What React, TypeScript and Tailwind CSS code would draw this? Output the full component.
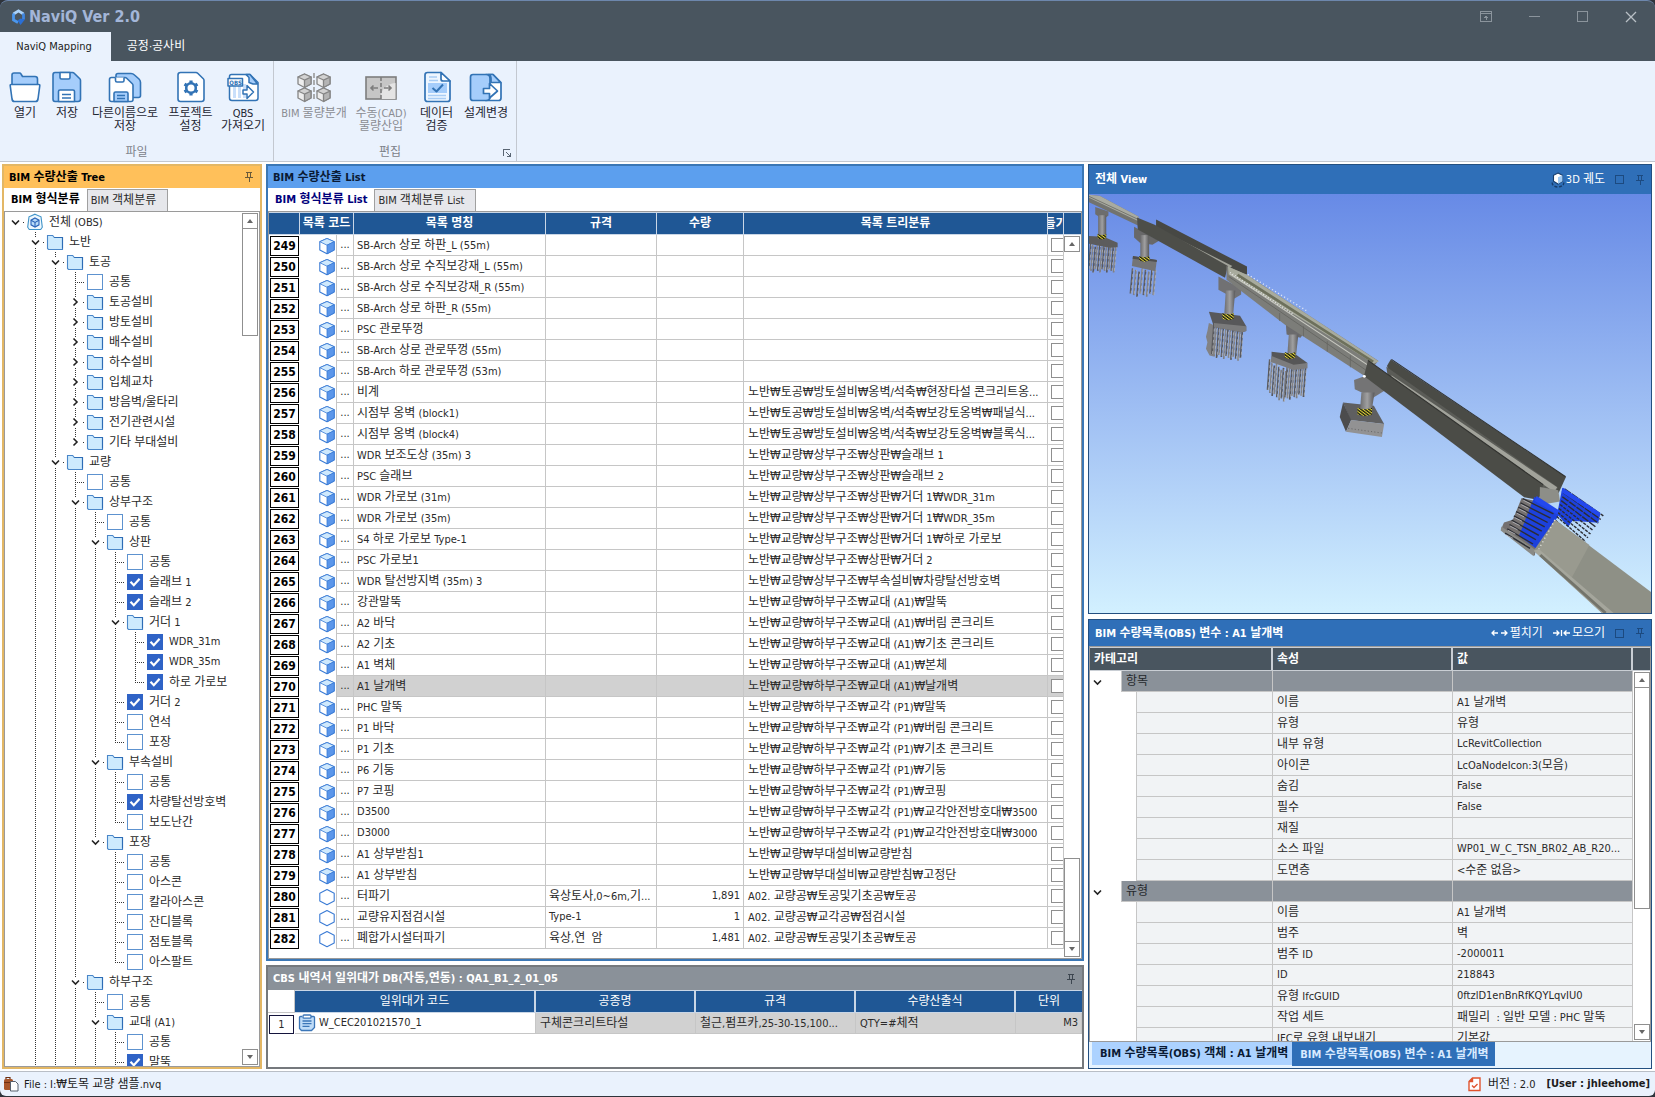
import React from "react";

/* Hangul and the won sign are set one size above the Latin text, as in the Windows UI fonts. */
function T({ children }: { children: string }) {
  const runs = children.split(/([\u3131-\uD79D\u20A9]+)/).filter(Boolean);
  return (
    <>
      {runs.map((r, i) =>
        /[\u3131-\uD79D\u20A9]/.test(r) ? (
          <span key={i} className="text-[12px]">{r}</span>
        ) : (
          <React.Fragment key={i}>{r}</React.Fragment>
        )
      )}
    </>
  );
}

/* ---------- small icons ---------- */

const Pin = ({ color = "#3d4650" }: { color?: string }) => (
  <svg width="10" height="10" viewBox="0 0 10 10" fill="none" stroke={color} shapeRendering="crispEdges">
    <path d="M2 .5h6M3.5 .5v5M6.5 .5v5M1 5.5h8M5 5.5V10" />
  </svg>
);

const Square = () => (
  <svg width="9" height="9" viewBox="0 0 9 9" fill="none" stroke="#1c4a80" shapeRendering="crispEdges">
    <rect x=".5" y=".5" width="8" height="8" />
  </svg>
);

const Chevron = ({ open, guide = "" }: { open: boolean; guide?: string }) => (
  <svg width="20" height="20" viewBox="0 0 20 20" fill="none" stroke="#222" strokeWidth="1.6">
    {guide && <path d={guide} stroke="#333" strokeWidth="1" strokeDasharray="1 1" shapeRendering="crispEdges" />}
    {open ? <path d="M7 8.5l3.500 3.500 3.500-3.500" /> : <path d="M8.500 6.5L12 10l-3.500 3.500" />}
  </svg>
);

const Folder = () => (
  <svg width="18" height="18" viewBox="0 0 18 18">
    <path d="M1.5 2.5h5.2l1.6 2h8.2v12h-14l-1-1z" fill="#cdeafd" stroke="#4a87c9" strokeWidth="1.1" />
    <path d="M8.3 4.5h8.2v11" fill="none" stroke="#2d6cb5" strokeWidth="1.1" />
  </svg>
);

const RootIcon = () => (
  <svg width="18" height="18" viewBox="0 0 18 18" fill="none" stroke="#3f93c8" strokeWidth="1.1">
    <path d="M9 1.2l6 2.6 1.3 10.4-1.6 2.3H3.3l-1.6-2.3L3 3.8z" fill="#eef8fe" />
    <path d="M9 5l4 2.2v4.6L9 14l-4-2.2V7.200z" fill="#b9dcf8" stroke="#2a63b8" />
    <path d="M5 7.200L9 9.400l4-2.200M9 9.400V14" stroke="#2a63b8" />
  </svg>
);

const Cube = () => (
  <svg width="18" height="18" viewBox="0 0 18 18" strokeLinejoin="round">
    <path d="M9 1.500l7.200 3.200v8.200L9 16.800 1.800 12.900V4.700z" fill="#fff" stroke="#3a7bd5" strokeWidth="1.100" />
    <path d="M9 1.500l7.200 3.200L9 8.200 1.800 4.700z" fill="#cfe9fd" stroke="#3a7bd5" strokeWidth=".8" />
    <path d="M9 8.200l7.200-3.500v8.200L9 16.800z" fill="#5b96ea" stroke="#3a7bd5" strokeWidth=".8" />
  </svg>
);

const Hexagon = () => (
  <svg width="18" height="18" viewBox="0 0 18 18" strokeLinejoin="round">
    <path d="M9 1.500l7.200 3.700v7.800L9 16.700 1.800 13V5.200z" fill="#fff" stroke="#3a7bd5" strokeWidth="1.100" />
  </svg>
);

const Clipboard = () => (
  <svg width="18" height="18" viewBox="0 0 18 18" fill="none" stroke="#3b76b8" strokeWidth="1.300">
    <path d="M4 2.500H2.500a1 1 0 00-1 1v11l2 2h10l3-3v-10a1 1 0 00-1-1H13" fill="#bfdcf8" />
    <rect x="5" y="1" width="8" height="3.200" rx="1" fill="#fff" />
    <path d="M4.500 7h9M4.500 9.700h9M4.500 12.400h7" />
  </svg>
);

const Orbit = () => (
  <svg width="14" height="18" viewBox="0 0 14 18">
    <path d="M1.500 11.500c-1 2 2 4.500 5.500 4.500s6.500-2.500 5.500-4.500" fill="none" stroke="#173c6b" strokeWidth="1.400" strokeDasharray="3 1.500" />
    <path d="M7 2l4.500 2.300v6L7 13 2.500 10.300v-6z" fill="#fff" stroke="#173c6b" strokeWidth="1.100" />
    <path d="M7 6.300l4.500-2v6L7 13z" fill="#9fc9f2" />
  </svg>
);

/* ---------- ribbon icons ---------- */

const B = "#3273b5";
const L = "#a5cdfb";

const OpenIcon = () => (
  <svg width="32" height="32" viewBox="0 0 32 32" stroke={B} strokeWidth="1.600" strokeLinejoin="round">
    <path d="M3 14V4Q3 2 5 2h5.500q1 0 1.500 1l1.500 2.500H26Q28.500 5.500 28.500 8v6z" fill={L} />
    <path d="M2.200 13.500h27.600q1.200 0 1 1.200L29 28q-.4 2.500-2.500 2.500h-21Q3.400 30.500 3 28L1.200 14.700q-.2-1.200 1-1.200z" fill="#fff" />
  </svg>
);

const SaveIcon = () => (
  <svg width="32" height="32" viewBox="0 0 32 32" stroke={B} strokeWidth="1.600" strokeLinejoin="round">
    <path d="M4 1.500h17.500q1 0 1.700.7l5.600 5.600q.7.700.7 1.700V28q0 2.500-2.500 2.500H4Q2 30.500 2 28V4q0-2.500 2-2.500z" fill={L} />
    <path d="M9 1.500v5q0 1.500 1.500 1.500h7q1.500 0 1.500-1.500v-5z" fill="#fff" />
    <path d="M7.500 30.500v-10q0-1.500 1.500-1.500h13q1.500 0 1.500 1.500v10z" fill="#fff" />
    <path d="M11 23.500h9M11 27h9" fill="none" />
  </svg>
);

const SaveAsIcon = () => (
  <svg width="34" height="32" viewBox="0 0 34 32" stroke={B} strokeWidth="1.600" strokeLinejoin="round">
    <path d="M10 2.500h13q2 0 3.500 1.500l4.500 4q1.500 1.500 1.500 3.500v13q0 2-2 2H8V4.500q0-2 2-2z" fill={L} />
    <path d="M3.500 6.500H17q1 0 1.700.7l5.600 5.600q.7.700.7 1.700v14q0 2-2 2H3.500q-2 0-2-2v-20q0-2 2-2z" fill="#fff" />
    <path d="M7.500 6.500v3q0 1.500 1.500 1.500h5.500q1.500 0 1.500-1.500v-3" fill="#fff" />
    <path d="M6 30.500v-8q0-1.500 1.500-1.500h11q1.500 0 1.500 1.500v8z" fill={L} />
    <path d="M9 24.500h8M9 27.500h8" fill="none" />
  </svg>
);

const SettingsIcon = () => (
  <svg width="32" height="32" viewBox="0 0 32 32" stroke={B} strokeWidth="1.600" strokeLinejoin="round">
    <path d="M5.500 1.500H21q1 0 1.700.7l5.600 5.600q.7.700.7 1.700V28q0 2.500-2.500 2.500h-21Q3 30.500 3 28V4q0-2.500 2.500-2.500z" fill="#fff" />
    <circle cx="16" cy="17" r="4.800" fill="none" strokeWidth="2.600" />
    <path d="M16 9.500v3M16 21.500v3M9.500 13.200l2.600 1.500M19.900 19.300l2.600 1.500M9.500 20.800l2.600-1.500M19.900 14.700l2.600-1.500" strokeWidth="3.200" />
  </svg>
);

const QbsIcon = () => (
  <svg width="32" height="32" viewBox="0 0 32 32" stroke={B} strokeWidth="1.500" strokeLinejoin="round">
    <path d="M4.500 3.500H23l8 8v15.500q0 2.500-2.500 2.500H5Q2.500 29.500 2.500 27V5.500q0-2 2-2z" fill="#fff" />
    <path d="M6 15h3v12H6zM11 15h3v12h-3zM16 13h3v14h-3z" fill="#c9dffa" stroke="none" />
    <path d="M19 3.500l3 3v5l4 1.500h4.500L23 3.500z" fill={L} />
    <rect x="1" y="7.500" width="14.500" height="7.500" fill="#fff" />
    <text x="2.300" y="13.500" fontSize="6" fontWeight="700" fill={B} stroke="none" fontFamily="DejaVu Sans Condensed">QBS</text>
    <path d="M16 19h4v-4.500l6.500 6.500-6.500 6.500V23h-4z" fill="#fff" />
  </svg>
);

const MiniCube = ({ x, y }: { x: number; y: number }) => (
  <g transform={`translate(${x} ${y})`} stroke="#858585" strokeWidth="1.300" strokeLinejoin="round">
    <path d="M6.500 0l6.500 3v7l-6.500 3.500L0 10V3z" fill="#ededed" />
    <path d="M6.500 6l6.500-3v7l-6.500 3.500z" fill="#b4b4b4" />
    <path d="M0 3l6.500 3L13 3 6.500 0z" fill="#d2d2d2" />
  </g>
);

const SplitIcon = () => (
  <svg width="34" height="32" viewBox="0 0 34 32">
    <MiniCube x={1} y={3} />
    <MiniCube x={1} y={17} />
    <MiniCube x={20} y={3} />
    <MiniCube x={20} y={17} />
    <path d="M17 2v28" stroke="#9a9a9a" strokeWidth="1.600" strokeDasharray="5 2" />
  </svg>
);

const CadIcon = () => (
  <svg width="34" height="32" viewBox="0 0 34 32" fill="none" stroke="#7d7d7d" strokeWidth="1.600">
    <rect x="2" y="6" width="30" height="22" fill="#c6c6c6" />
    <path d="M17 28c-1-9 5-15 14.500-16v16z" fill="#e4e4e4" stroke="none" />
    <path d="M17 6v22" strokeDasharray="4 2" />
    <path d="M14 17H7M9.500 14.500L7 17l2.500 2.500M20 17h7M24.500 14.500L27 17l-2.500 2.500" />
  </svg>
);

const VerifyIcon = () => (
  <svg width="32" height="32" viewBox="0 0 32 32" stroke={B} strokeWidth="1.700" strokeLinejoin="round">
    <path d="M6.500 1.500H20l9 8.500v18q0 2.500-2.500 2.500h-20Q4 30.500 4 28V4q0-2.500 2.500-2.500z" fill="#eef6ff" />
    <path d="M8 6h8M8 9.500h9M7 24.500h18M7 27.500h18" stroke="#a9cdf5" />
    <path d="M7 12h19v10H7z" fill={L} stroke="none" />
    <path d="M20 1.500V8q0 2 2 2h7z" fill="#fff" />
    <path d="M11.500 17l4 3.500 6.500-7" fill="none" strokeWidth="2" />
  </svg>
);

const ChangeIcon = () => (
  <svg width="34" height="32" viewBox="0 0 34 32" stroke={B} strokeWidth="1.700" strokeLinejoin="round">
    <path d="M17 3.500h7l8 8v15.500q0 2.500-2.500 2.500H17z" fill="#fff" />
    <path d="M4 3.500h13q4 0 4 4V26q0 3.500-4 3.500H4q-2.500 0-2.500-2.500V6Q1.500 3.500 4 3.500z" fill={L} />
    <path d="M19 3.500q3 .5 3 4v4h9.500l-7.500-8z" fill={L} />
    <path d="M14.500 17.500h6v-5l8 7.500-8 7v-4.500h-6z" fill="#fff" />
  </svg>
);

/* ---------- shared pieces ---------- */

function ScrollBar({ thumb }: { thumb: "tree" | "list" | "props" }) {
  const btn = "grid h-4 w-4 shrink-0 place-items-center border border-[#8f8f8f] bg-white";
  return (
    <div className="flex w-4 shrink-0 flex-col bg-white">
      <button className={btn} aria-label="위로">
        <svg width="6" height="4" viewBox="0 0 6 4"><path d="M0 4l3-4 3 4z" fill="#666" /></svg>
      </button>
      {thumb === "tree" && <div className="-mt-px h-[108px] border border-[#8f8f8f]" />}
      {thumb === "props" && <div className="-mt-px h-[222px] border border-[#8f8f8f]" />}
      <div className="flex-1" />
      {thumb === "list" && <div className="-mb-px h-[84px] border border-[#8f8f8f]" />}
      <button className={btn} aria-label="아래로">
        <svg width="6" height="4" viewBox="0 0 6 4"><path d="M0 0l3 4 3-4z" fill="#666" /></svg>
      </button>
    </div>
  );
}

function TabStrip({ active, other, color }: { active: string; other: string; color: string }) {
  return (
    <div className="flex h-6 items-end border-b border-[#9a9a9a] bg-white" role="tablist">
      <button role="tab" aria-selected="true" className={"h-[23px] whitespace-nowrap pl-[7px] pr-[7px] text-left font-bold " + color}>
        <T>{active}</T>
      </button>
      <button role="tab" aria-selected="false" className="h-[22px] whitespace-nowrap border border-b-0 border-[#a0a0a0] bg-[#e6e7eb] pl-[3px] pr-[11px] text-left">
        <T>{other}</T>
      </button>
    </div>
  );
}

/* ---------- title and ribbon ---------- */

function RibbonButton({ icon, lines, w, off }: { icon: React.ReactNode; lines: string[]; w: string; off?: boolean }) {
  return (
    <button disabled={off} className={"flex flex-col items-center whitespace-nowrap leading-[13px] " + w + (off ? " text-[#8a8d93]" : " text-[#1e2633]")}>
      {icon}
      <span className="mt-1">
        {lines.map((l) => (
          <span key={l} className="block"><T>{l}</T></span>
        ))}
      </span>
    </button>
  );
}

function TitleBar() {
  return (
    <header className="rounded-t-lg border-t border-[#6d87ad] bg-[#49555f]">
      <div className="flex h-[31px] items-center pl-[11px] pr-[18px]">
        <svg width="15" height="18" viewBox="0 0 15 18" fill="none">
          <path d="M2.500 6L7.500 2.800 12.500 6" stroke="#a9d2fb" strokeWidth="2.800" />
          <path d="M2.500 5.500v6.400l4.500 2.600" stroke="#4b97ee" strokeWidth="2.800" />
          <path d="M12.500 5.500v6" stroke="#3f86e0" strokeWidth="2.800" />
          <path d="M6.500 12.500l3-2 4.400 1-4.400 5.500z" fill="#2a6fd6" />
        </svg>
        <h1 className="ml-[3px] text-[16px] font-bold text-[#a3b6d8]">NaviQ Ver 2.0</h1>
        <div className="ml-auto flex items-center gap-[37px]">
          <button aria-label="리본 표시 옵션">
            <svg width="12" height="11" viewBox="0 0 12 11" fill="none" stroke="#8b949c" shapeRendering="crispEdges">
              <path d="M.5 .5h11v10H.5zM.5 2.500h11M6 9V4.500M4 6.500h4M5 5.500h2" />
            </svg>
          </button>
          <button aria-label="최소화">
            <svg width="11" height="11" viewBox="0 0 11 11" stroke="#8b949c" shapeRendering="crispEdges"><path d="M0 5.500h11" /></svg>
          </button>
          <button aria-label="최대화">
            <svg width="11" height="11" viewBox="0 0 11 11" fill="none" stroke="#8b949c" shapeRendering="crispEdges"><path d="M.5 .5h10v10H.5z" /></svg>
          </button>
          <button aria-label="닫기">
            <svg width="12" height="12" viewBox="0 0 12 12" stroke="#b9c0c6" strokeWidth="1.300"><path d="M1 1l10 10M11 1L1 11" /></svg>
          </button>
        </div>
      </div>
      <nav className="flex h-[29px]">
        <button className="w-[111px] bg-[#eaf2fd] pr-[3px] text-[#222]">NaviQ Mapping</button>
        <button className="w-[90px] text-white"><T>공정·공사비</T></button>
      </nav>
    </header>
  );
}

function Ribbon() {
  return (
    <section className="flex h-[101px] border-b border-[#c3c8d0] bg-[#eaf2fd]">
      <div className="flex w-[274px] flex-col border-r border-[#c3c8d0] pl-1 pt-[10px]">
        <div className="flex h-[73px] items-start">
          <RibbonButton w="w-[42px]" icon={<OpenIcon />} lines={["열기"]} />
          <RibbonButton w="w-[42px]" icon={<SaveIcon />} lines={["저장"]} />
          <RibbonButton w="w-[74px]" icon={<SaveAsIcon />} lines={["다른이름으로", "저장"]} />
          <RibbonButton w="w-[57px]" icon={<SettingsIcon />} lines={["프로젝트", "설정"]} />
          <RibbonButton w="w-[48px]" icon={<QbsIcon />} lines={["QBS", "가져오기"]} />
        </div>
        <div className="pr-1 text-center leading-[16px] text-[#7d828a]"><T>파일</T></div>
      </div>
      <div className="flex w-[243px] flex-col border-r border-[#c3c8d0] pl-[6px] pt-[10px]">
        <div className="flex h-[73px] items-start">
          <RibbonButton off w="w-[68px]" icon={<SplitIcon />} lines={["BIM 물량분개"]} />
          <RibbonButton off w="w-[66px]" icon={<CadIcon />} lines={["수동(CAD)", "물량산입"]} />
          <RibbonButton w="w-[45px]" icon={<VerifyIcon />} lines={["데이터", "검증"]} />
          <RibbonButton w="w-[54px]" icon={<ChangeIcon />} lines={["설계변경"]} />
        </div>
        <div className="relative pr-4 text-center leading-[16px] text-[#7d828a]">
          <T>편집</T>
          <button className="absolute right-[5px] top-[5px]" aria-label="편집 옵션">
            <svg width="8" height="8" viewBox="0 0 8 8" fill="none" stroke="#596573" shapeRendering="crispEdges">
              <path d="M.5 7V.5H7M3 3l4 4M7.500 3.500v4h-4" />
            </svg>
          </button>
        </div>
      </div>
    </section>
  );
}

/* ---------- tree panel ---------- */

type Kind = "root" | "open" | "closed" | "off" | "on";
type Node = [number, Kind, string];

const nodes: Node[] = [
  [0, "root", "전체 (OBS)"],
  [1, "open", "노반"],
  [2, "open", "토공"],
  [3, "off", "공통"],
  [3, "closed", "토공설비"],
  [3, "closed", "방토설비"],
  [3, "closed", "배수설비"],
  [3, "closed", "하수설비"],
  [3, "closed", "입체교차"],
  [3, "closed", "방음벽/울타리"],
  [3, "closed", "전기관련시설"],
  [3, "closed", "기타 부대설비"],
  [2, "open", "교량"],
  [3, "off", "공통"],
  [3, "open", "상부구조"],
  [4, "off", "공통"],
  [4, "open", "상판"],
  [5, "off", "공통"],
  [5, "on", "슬래브 1"],
  [5, "on", "슬래브 2"],
  [5, "open", "거더 1"],
  [6, "on", "WDR_31m"],
  [6, "on", "WDR_35m"],
  [6, "on", "하로 가로보"],
  [5, "on", "거더 2"],
  [5, "off", "연석"],
  [5, "off", "포장"],
  [4, "open", "부속설비"],
  [5, "off", "공통"],
  [5, "on", "차량탈선방호벽"],
  [5, "off", "보도난간"],
  [4, "open", "포장"],
  [5, "off", "공통"],
  [5, "off", "아스콘"],
  [5, "off", "칼라아스콘"],
  [5, "off", "잔디블록"],
  [5, "off", "점토블록"],
  [5, "off", "아스팔트"],
  [3, "open", "하부구조"],
  [4, "off", "공통"],
  [4, "open", "교대 (A1)"],
  [5, "off", "공통"],
  [5, "on", "말뚝"],
];

/* True when the branch at this level goes on below the given row. */
function continues(row: number, level: number) {
  for (let i = row + 1; i < nodes.length; i++) {
    if (nodes[i][0] === level) return true;
    if (nodes[i][0] < level) return false;
  }
  return true;
}

function Guide({ d }: { d: string }) {
  return (
    <svg className="shrink-0" width="20" height="20" viewBox="0 0 20 20" fill="none" stroke="#333" strokeDasharray="1 1" shapeRendering="crispEdges">
      <path d={d} />
    </svg>
  );
}

function TreeRow({ index }: { index: number }) {
  const [level, kind, name] = nodes[index];
  const leaf = kind === "on" || kind === "off";
  const more = continues(index, level);
  const stub = (level > 0 ? "M10.500 0v5" : "") + (level > 0 && more ? "M10.500 16v4" : "") + "M18 10.500h2";
  const guides = [];
  for (let k = 1; k < level; k++) guides.push(<Guide key={k} d={continues(index, k) ? "M10.500 0v20" : ""} />);
  return (
    <li className="flex h-5 items-center">
      {level > 0 && <span className="w-5 shrink-0" />}
      {guides}
      {leaf ? (
        <>
          <Guide d={(more ? "M10.500 0v20" : "M10.500 0v10") + "M10 10.500h10"} />
          <label className="flex items-center">
            <span className="relative mx-[2px] block h-4 w-4 shrink-0">
              <input type="checkbox" defaultChecked={kind === "on"} className="peer block h-4 w-4 appearance-none border border-[#5d92cf] bg-white checked:border-[#2f63c6] checked:bg-[#2f63c6]" />
              <svg className="pointer-events-none absolute inset-0 hidden peer-checked:block" width="16" height="16" viewBox="0 0 16 16" fill="none" stroke="#fff" strokeWidth="2.200">
                <path d="M3.500 7.800l3.300 3.400 5.800-6.400" />
              </svg>
            </span>
            <span className="whitespace-nowrap pl-1"><T>{name}</T></span>
          </label>
        </>
      ) : (
        <>
          <button aria-label={name} className="shrink-0"><Chevron open={kind !== "closed"} guide={stub} /></button>
          <span className="mx-px flex shrink-0">{kind === "root" ? <RootIcon /> : <Folder />}</span>
          <span className="whitespace-nowrap pl-1"><T>{name}</T></span>
        </>
      )}
    </li>
  );
}

function TreePanel() {
  return (
    <section className="flex w-[260px] shrink-0 flex-col border-2 border-[#e3b765] bg-white">
      <h2 className="flex h-[22px] items-center justify-between bg-[#ffc05a] pl-[5px] pr-[6px] font-bold text-black">
        <span><T>BIM 수량산출 Tree</T></span>
        <Pin color="#6b5a38" />
      </h2>
      <TabStrip active="BIM 형식분류" other="BIM 객체분류" color="text-black" />
      <div className="flex min-h-0 flex-1 border-x border-b border-[#9a9a9a]">
        <ul className="min-h-0 flex-1 overflow-hidden">
          {nodes.map((_, i) => <TreeRow key={i} index={i} />)}
        </ul>
        <div className="flex py-px pr-px"><ScrollBar thumb="tree" /></div>
      </div>
    </section>
  );
}

/* ---------- quantity list ---------- */

type Row = [string, string, string, string];

const listRows: Row[] = [
  ["SB-Arch 상로 하판_L (55m)", "", "", ""],
  ["SB-Arch 상로 수직보강재_L (55m)", "", "", ""],
  ["SB-Arch 상로 수직보강재_R (55m)", "", "", ""],
  ["SB-Arch 상로 하판_R (55m)", "", "", ""],
  ["PSC 관로뚜껑", "", "", ""],
  ["SB-Arch 상로 관로뚜껑 (55m)", "", "", ""],
  ["SB-Arch 하로 관로뚜껑 (53m)", "", "", ""],
  ["비계", "", "", "노반₩토공₩방토설비₩옹벽/석축₩현장타설 콘크리트옹..."],
  ["시점부 옹벽 (block1)", "", "", "노반₩토공₩방토설비₩옹벽/석축₩보강토옹벽₩패널식..."],
  ["시점부 옹벽 (block4)", "", "", "노반₩토공₩방토설비₩옹벽/석축₩보강토옹벽₩블록식..."],
  ["WDR 보조도상 (35m) 3", "", "", "노반₩교량₩상부구조₩상판₩슬래브 1"],
  ["PSC 슬래브", "", "", "노반₩교량₩상부구조₩상판₩슬래브 2"],
  ["WDR 가로보 (31m)", "", "", "노반₩교량₩상부구조₩상판₩거더 1₩WDR_31m"],
  ["WDR 가로보 (35m)", "", "", "노반₩교량₩상부구조₩상판₩거더 1₩WDR_35m"],
  ["S4 하로 가로보 Type-1", "", "", "노반₩교량₩상부구조₩상판₩거더 1₩하로 가로보"],
  ["PSC 가로보1", "", "", "노반₩교량₩상부구조₩상판₩거더 2"],
  ["WDR 탈선방지벽 (35m) 3", "", "", "노반₩교량₩상부구조₩부속설비₩차량탈선방호벽"],
  ["강관말뚝", "", "", "노반₩교량₩하부구조₩교대 (A1)₩말뚝"],
  ["A2 바닥", "", "", "노반₩교량₩하부구조₩교대 (A1)₩버림 콘크리트"],
  ["A2 기초", "", "", "노반₩교량₩하부구조₩교대 (A1)₩기초 콘크리트"],
  ["A1 벽체", "", "", "노반₩교량₩하부구조₩교대 (A1)₩본체"],
  ["A1 날개벽", "", "", "노반₩교량₩하부구조₩교대 (A1)₩날개벽"],
  ["PHC 말뚝", "", "", "노반₩교량₩하부구조₩교각 (P1)₩말뚝"],
  ["P1 바닥", "", "", "노반₩교량₩하부구조₩교각 (P1)₩버림 콘크리트"],
  ["P1 기초", "", "", "노반₩교량₩하부구조₩교각 (P1)₩기초 콘크리트"],
  ["P6 기둥", "", "", "노반₩교량₩하부구조₩교각 (P1)₩기둥"],
  ["P7 코핑", "", "", "노반₩교량₩하부구조₩교각 (P1)₩코핑"],
  ["D3500", "", "", "노반₩교량₩하부구조₩교각 (P1)₩교각안전방호대₩3500"],
  ["D3000", "", "", "노반₩교량₩하부구조₩교각 (P1)₩교각안전방호대₩3000"],
  ["A1 상부받침1", "", "", "노반₩교량₩부대설비₩교량받침"],
  ["A1 상부받침", "", "", "노반₩교량₩부대설비₩교량받침₩고정단"],
  ["터파기", "육상토사,0~6m,기...", "1,891", "A02. 교량공₩토공및기초공₩토공"],
  ["교량유지점검시설", "Type-1", "1", "A02. 교량공₩교각공₩점검시설"],
  ["폐합가시설터파기", "육상,연  암", "1,481", "A02. 교량공₩토공및기초공₩토공"],
];

const cell = "h-[21px] overflow-hidden whitespace-pre border-b border-r border-[#c6c6c6] p-0 leading-[18px]";
const head = "h-[23px] overflow-hidden whitespace-nowrap border border-l-0 border-[#c9d6e6] bg-[#1f5795] p-0 text-center text-white";

function ListPanel() {
  return (
    <section className="flex min-h-0 flex-1 flex-col border-2 border-[#3b77b5] bg-white">
      <h2 className="flex h-[22px] items-center bg-[#5c9fee] pl-[5px] font-bold text-[#0a1a33]">
        <span><T>BIM 수량산출 List</T></span>
      </h2>
      <TabStrip active="BIM 형식분류 List" other="BIM 객체분류 List" color="text-[#00007c]" />
      <div className="flex min-h-0 flex-1 border-x border-b border-[#9a9a9a]">
        <div className="min-h-0 min-w-0 flex-1 overflow-hidden">
          <table className="w-full table-fixed border-separate border-spacing-0">
            <colgroup>
              <col className="w-[31px]" />
              <col className="w-[37px]" />
              <col className="w-[17px]" />
              <col className="w-[192px]" />
              <col className="w-[111px]" />
              <col className="w-[87px]" />
              <col />
              <col className="w-[16px]" />
            </colgroup>
            <thead>
              <tr>
                <th className={head} aria-label="번호" />
                <th className={head} colSpan={2}><T>목록 코드</T></th>
                <th className={head}><T>목록 명칭</T></th>
                <th className={head}><T>규격</T></th>
                <th className={head}><T>수량</T></th>
                <th className={head}><T>목록 트리분류</T></th>
                <th className={head}><span className="flex justify-center overflow-hidden"><T>들기</T></span></th>
              </tr>
            </thead>
            <tbody>
              {listRows.map(([name, spec, qty, path], i) => {
                const no = 249 + i;
                const bg = no === 270 ? " bg-[#d1d1d1]" : "";
                return (
                  <tr key={no}>
                    <th className="h-[21px] p-0 pt-px">
                      <div className="mx-px h-[20px] border border-black text-center text-[12px] font-bold leading-[18px] text-black">{no}</div>
                    </th>
                    <td className="h-[21px] border-r border-[#c6c6c6] p-0">
                      <div className="flex justify-end">{no < 280 ? <Cube /> : <Hexagon />}</div>
                    </td>
                    <td className={cell + bg + " text-center"}>...</td>
                    <td className={cell + bg + " pl-[3px]"}><T>{name}</T></td>
                    <td className={cell + bg + " pl-[3px]"}><T>{spec}</T></td>
                    <td className={cell + bg + " pr-[3px] text-right"}>{qty}</td>
                    <td className={cell + bg + " pl-[4px]"}><T>{path}</T></td>
                    <td className={cell + bg}>
                      <input type="checkbox" aria-label={no + " 들기"} className="ml-[3px] block h-[14px] w-5 appearance-none border border-[#8f8f8f] bg-white" />
                    </td>
                  </tr>
                );
              })}
            </tbody>
          </table>
        </div>
        <div className="flex w-[17px] flex-col">
          <div className="h-[23px] border-y border-[#c9d6e6] bg-[#1f5795]" />
          <div className="flex flex-1 py-px"><ScrollBar thumb="list" /></div>
        </div>
      </div>
    </section>
  );
}

function CostPanel() {
  const h = "h-[23px] border-b border-r-2 border-t border-[#c9d6e6] bg-[#1f5795] p-0 text-center font-normal text-white last:border-r-0";
  const c = "h-[21px] whitespace-nowrap border-b border-r border-[#c6c6c6] bg-[#d1d1d1] p-0 pl-[4px] leading-[18px]";
  return (
    <section className="flex h-[104px] shrink-0 flex-col border-2 border-[#75797d] bg-white">
      <h2 className="flex h-[23px] items-center justify-between bg-[#8a9199] pl-[5px] pr-[6px] font-bold text-white">
        <span><T>CBS 내역서 일위대가 DB(자동,연동) : QA1_B1_2_01_05</T></span>
        <Pin />
      </h2>
      <table className="w-full table-fixed border-separate border-spacing-0">
        <colgroup>
          <col className="w-[27px]" />
          <col className="w-[241px]" />
          <col className="w-[160px]" />
          <col className="w-[160px]" />
          <col className="w-[160px]" />
          <col />
        </colgroup>
        <thead>
          <tr>
            <th className="border-b border-r border-[#c6c6c6] p-0" aria-label="번호" />
            <th className={h}><T>일위대가 코드</T></th>
            <th className={h}><T>공종명</T></th>
            <th className={h}><T>규격</T></th>
            <th className={h}><T>수량산출식</T></th>
            <th className={h}><T>단위</T></th>
          </tr>
        </thead>
        <tbody>
          <tr>
            <th className="h-[21px] p-0 pt-px">
              <div className="mx-px h-[19px] border border-[#14143c] text-center font-normal leading-[17px]">1</div>
            </th>
            <td className="h-[21px] border-b border-r border-[#c6c6c6] p-0">
              <div className="flex items-center gap-[3px] pl-[3px]"><Clipboard />W_CEC201021570_1</div>
            </td>
            <td className={c}><T>구체콘크리트타설</T></td>
            <td className={c}><T>철근,펌프카,25-30-15,100...</T></td>
            <td className={c}><T>QTY=#체적</T></td>
            <td className={c + " pr-[3px] text-right"}>M3</td>
          </tr>
        </tbody>
      </table>
    </section>
  );
}

/* ---------- 3D view ---------- */

function Piles({ x, y, w, h, n, skew = 0 }: { x: number; y: number; w: number; h: number; n: number; skew?: number }) {
  const lines = [];
  for (let i = 0; i < n; i++) {
    const px = x + (w * i) / (n - 1);
    const dy = (i % 3) * 5 + (skew * i) / n;
    lines.push(<path key={i} d={`M${px} ${y + dy}L${px - 6} ${y + h + dy}`} stroke={i % 2 ? "#808083" : "#58585c"} strokeWidth="4.500" />);
    lines.push(<path key={"d" + i} d={`M${px + 2} ${y + dy}L${px - 4} ${y + h + dy}`} stroke="#b9babd" strokeWidth="2" strokeDasharray="9 8" strokeDashoffset={i * 5} />);
  }
  return <g>{lines}</g>;
}

const Band = ({ x, y, w, h }: { x: number; y: number; w: number; h: number }) => (
  <path d={`M${x} ${y}q${w / 2} 8 ${w} 0v${h}q${-w / 2} 9 ${-w} 0z`} fill="url(#hazard)" />
);

const rods = Array.from({ length: 9 }, (_, i) => i);

function Scene() {
  return (
    <svg className="block h-full w-full" viewBox="25 101 1533 1264" preserveAspectRatio="none" role="img" aria-label="3D">
      <defs>
        <linearGradient id="sky" x1="0" y1="0" x2="0" y2="1">
          <stop offset="0" stopColor="#678ae6" />
          <stop offset=".5" stopColor="#9dbdf3" />
          <stop offset="1" stopColor="#d2f0ff" />
        </linearGradient>
        <linearGradient id="column" x1="0" y1="0" x2="1" y2="0">
          <stop offset="0" stopColor="#6c6c6e" />
          <stop offset=".5" stopColor="#a0a0a1" />
          <stop offset="1" stopColor="#59595b" />
        </linearGradient>
        <pattern id="hazard" width="7" height="7" patternUnits="userSpaceOnUse" patternTransform="rotate(-50)">
          <rect width="7" height="7" fill="#e8dc3c" />
          <rect width="4" height="7" fill="#1b1b12" />
        </pattern>
      </defs>
      <rect x="25" y="101" width="1533" height="1264" fill="url(#sky)" />

      {/* piers */}
      <Piles x={30} y={250} w={68} h={78} n={12} />
      <path d="M25 228l40 2 38 18v14l-22 1-56-12z" fill="#5c5c5d" />
      <path d="M42 140l36 14v12l-14 12-22-16z" fill="#6d6d6d" />
      <rect x="50" y="165" width="22" height="65" fill="url(#column)" />
      <Band x={48} y={221} w={24} h={13} />

      <Piles x={144} y={325} w={62} h={76} n={8} />
      <path d="M145 288l65 12-4 34-64-16z" fill="#747475" />
      <path d="M145 288l65 12v6l-66-10z" fill="#4f4f50" />
      <path d="M148 200l68 42-18 12-34-6-16-16z" fill="#686869" />
      <rect x="165" y="225" width="24" height="68" fill="url(#column)" />
      <Band x={162} y={288} w={28} h={13} />

      <path d="M352 490l16 8v94l-14-4-10-20 4-20-4-16 4-18z" fill="#828284" />
      <Piles x={366} y={490} w={78} h={94} n={13} skew={12} />
      <path d="M352 456l85 12 17 32v14l-12 4-76-16z" fill="#58585a" />
      <path d="M366 490l88 10v14l-12 4-76-16z" fill="#7b7b7c" />
      <path d="M378 350l62 36v18l-18 12-44-26z" fill="#717173" />
      <path d="M398 392h26l-6 75h-24z" fill="url(#column)" />
      <Band x={389} y={460} w={31} h={17} />

      <Piles x={518} y={600} w={44} h={92} n={8} skew={34} />
      <Piles x={566} y={622} w={50} h={92} n={9} skew={-12} />
      <path d="M523 577l66 8 32 26-38 18-60-26z" fill="#565657" />
      <path d="M523 590l60 26 38-5v16l-38 5-62-24z" fill="#7c7c7d" />
      <path d="M562 495l50 24-10 16-38-10z" fill="#6b6b6d" />
      <path d="M570 525h26l-6 62h-24z" fill="url(#column)" />
      <Band x={559} y={578} w={29} h={16} />

      <path d="M718 730l84 10 28 55-92-12z" fill="#5f5f60" />
      <path d="M718 730l22 53-14 35-17-44z" fill="#4c4c4d" />
      <path d="M740 783l90 12-6 39-98-16z" fill="#929293" />
      <path d="M732 808l92 14" stroke="#555" strokeWidth="2" strokeDasharray="3 6" />
      <path d="M748 662l30-12 56 42-34 24-50-26z" fill="#747475" />
      <path d="M768 700h36l-8 56h-32z" fill="url(#column)" />
      <Band x={757} y={746} w={40} h={20} />

      {/* far spans */}
      <path d="M25 103l30 4 105 62v28L25 126z" fill="#72736f" />
      <path d="M25 103l30 4 105 62v14L25 112z" fill="#a9aba1" />
      <path d="M25 108l135 70" stroke="#5d5e58" strokeWidth="2" />
      <path d="M208 178l248 142v24l-40-8-208-138z" fill="#474844" />
      <path d="M196 196l220 122-12 10-214-118z" fill="#a1a299" />
      <path d="M156 172l48 22 200 124-8 36-238-146z" fill="#4d4e49" />

      {/* centre spans */}
      <path d="M400 318l54 26 360 260-34 48-222-158-158-134z" fill="#7c7d79" />
      <path d="M404 320l50 24 362 262-14 6-396-268z" fill="#a8ab9d" />
      <path d="M430 345l370 262" stroke="#6d705c" strokeWidth="8" />
      <path d="M410 342l382 280" stroke="#c9cac2" strokeWidth="3" />
      <path d="M406 350l374 282" stroke="#5d5e5a" strokeWidth="2" />
      <path d="M458 344l165 112" stroke="#e4e8f2" strokeWidth="4" strokeDasharray="3 7" />
      <path d="M410 338l170 124" stroke="#eef0f2" strokeWidth="5" strokeDasharray="2 6" />
      <path d="M545 460v24M610 500v30M675 545v32M738 588v36" stroke="#63645f" strokeWidth="2" />

      {/* near span */}
      <path d="M848 600l478 355-20 48-460-350-8-34z" fill="#4a4b46" />
      <path d="M836 622l468 364-6 18-36-6-420-330z" fill="#5b5c57" />
      <path d="M850 648l452 338-8 14-444-338z" fill="#a2a39b" />
      <path d="M786 603l478 375-12 46-40-8-437-366z" fill="#4b4c47" />
      <path d="M786 603l478 375" stroke="#31322f" strokeWidth="3" />
      <path d="M850 600l475 354" stroke="#31322f" strokeWidth="3" />
      <circle cx="776" cy="651" r="4" fill="#fff" />

      {/* abutment */}
      <path d="M1255 985l50 10 5 34-56 10z" fill="#8d8e88" />
      <path d="M1205 1018l58 14-22 160-92-80 8-20 24-8z" fill="#74706f" />
      <path d="M1150 1104l92 70-4 20-90-78z" fill="#8a8a86" />
      <path d="M1240 1014l70 50-64 108-48-40z" fill="#1d41dc" />
      <path d="M1316 987l104 78-6 28-70-6-12 18-30-38z" fill="#1d41dc" />
      {rods.map((i) => (
        <g key={i} fill="none" stroke="#2b2d33">
          <path d={`M${1208 - i * 6} ${1020 + i * 13}l${84 - i * 2} 46`} strokeWidth="4" />
          <path d={`M${1210 - i * 6} ${1025 + i * 13}l20 11`} stroke="#c9cacf" strokeWidth="2" />
          <path d={`M${1322 - i * 3} ${990 + i * 12}l${106 - i * 4} ${82 - i}`} strokeWidth="4" strokeDasharray={i > 3 ? "9 3" : "22 3"} />
        </g>
      ))}
      <path d="M1246 1012l62 44-6 12-62-42z" fill="#2348ee" />
      <path d="M1318 987l102 76-4 12-102-74z" fill="#2348ee" />

      {/* approach road */}
      <path d="M1296 1084l262 218v63h-134l-186-188z" fill="#8e9086" />
      <path d="M1296 1084l94 76-48 98-90-84z" fill="#999a8f" />
      <path d="M1252 1172l204 193h-32l-186-188z" fill="#a5a69c" />
      <path d="M1256 1190l178 175" stroke="#73746b" strokeWidth="8" />
      <path d="M1296 1084l-44 88" stroke="#d8d8d0" strokeWidth="4" strokeDasharray="4 8" />
    </svg>
  );
}

function ViewPanel() {
  return (
    <section className="flex min-h-0 flex-1 flex-col border border-[#234f80]">
      <h2 className="flex h-[29px] shrink-0 items-center bg-[#2f6fb8] pl-[6px] pr-[6px] font-bold text-white">
        <span><T>전체 View</T></span>
        <button className="ml-auto mr-[10px] flex items-center gap-px font-normal"><Orbit /><span><T>3D 궤도</T></span></button>
        <Square />
        <span className="ml-[11px]"><Pin color="#1c4a80" /></span>
      </h2>
      <div className="min-h-0 flex-1"><Scene /></div>
    </section>
  );
}

/* ---------- properties ---------- */

const groups: [string, [string, string][]][] = [
  ["항목", [
    ["이름", "A1 날개벽"],
    ["유형", "유형"],
    ["내부 유형", "LcRevitCollection"],
    ["아이콘", "LcOaNodeIcon:3(모음)"],
    ["숨김", "False"],
    ["필수", "False"],
    ["재질", ""],
    ["소스 파일", "WP01_W_C_TSN_BR02_AB_R20..."],
    ["도면층", "<수준 없음>"],
  ]],
  ["유형", [
    ["이름", "A1 날개벽"],
    ["범주", "벽"],
    ["범주 ID", "-2000011"],
    ["ID", "218843"],
    ["유형 IfcGUID", "0ftzlD1enBnRfKQYLqvIU0"],
    ["작업 세트", "패밀리  : 일반 모델 : PHC 말뚝"],
    ["IFC로 유형 내보내기", "기본값"],
  ]],
];

function PropsPanel() {
  const h = "h-[24px] border-b border-r-2 border-t border-[#c9ced4] bg-[#49555f] p-0 pl-[4px] text-left font-bold text-white";
  const g = "h-[21px] border-b border-r border-[#c6c6c6] bg-[#8a9199] p-0";
  const c = "h-[21px] whitespace-pre border-b border-r border-[#c6c6c6] bg-[#f1f3f5] p-0 pl-[4px] leading-[18px]";
  return (
    <section className="flex h-[450px] shrink-0 flex-col border border-[#234f80] bg-[#e6f3fe]">
      <h2 className="flex h-[26px] shrink-0 items-center bg-[#2f6fb8] pl-[6px] pr-[6px] font-bold text-white">
        <span><T>BIM 수량목록(OBS) 변수 : A1 날개벽</T></span>
        <button className="ml-auto flex items-center gap-[2px] font-normal">
          <svg width="17" height="8" viewBox="0 0 17 8" fill="none" stroke="#fff" strokeWidth="1.300"><path d="M7 4H1M3.500 1.500L1 4l2.500 2.500M10 4h6M13.500 1.500L16 4l-2.500 2.500" /></svg>
          <span><T>펼치기</T></span>
        </button>
        <button className="ml-[10px] mr-[10px] flex items-center gap-[2px] font-normal">
          <svg width="17" height="8" viewBox="0 0 17 8" fill="none" stroke="#fff" strokeWidth="1.300"><path d="M0 4h6M3.500 1.500L6 4 3.500 6.500M8.500 1v6M17 4h-6M13.500 1.500L11 4l2.500 2.500" /></svg>
          <span><T>모으기</T></span>
        </button>
        <Square />
        <span className="ml-[11px]"><Pin color="#1c4a80" /></span>
      </h2>
      <div className="flex min-h-0 flex-1 border border-[#9a9a9a] bg-white">
        <div className="min-h-0 min-w-0 flex-1 overflow-hidden">
          <table className="w-full table-fixed border-separate border-spacing-0">
            <colgroup>
              <col className="w-[32px]" />
              <col className="w-[15px]" />
              <col className="w-[136px]" />
              <col className="w-[180px]" />
              <col />
            </colgroup>
            <thead>
              <tr>
                <th className={h} colSpan={3}><T>카테고리</T></th>
                <th className={h}><T>속성</T></th>
                <th className={h}><T>값</T></th>
              </tr>
            </thead>
            <tbody>
              {groups.map(([title, items]) => (
                <React.Fragment key={title}>
                  <tr>
                    <td className="h-[21px] border-r border-[#c6c6c6] p-0">
                      <button aria-label={title} className="-ml-[3px] flex"><Chevron open /></button>
                    </td>
                    <td className={g + " pl-[4px] leading-[18px] text-[#26292d]"} colSpan={2}><T>{title}</T></td>
                    <td className={g} />
                    <td className={g} />
                  </tr>
                  {items.map(([k, v]) => (
                    <tr key={k}>
                      <td className="h-[21px] border-r border-[#c6c6c6] p-0" colSpan={2} />
                      <td className={c} />
                      <td className={c}><T>{k}</T></td>
                      <td className={c}><T>{v}</T></td>
                    </tr>
                  ))}
                </React.Fragment>
              ))}
            </tbody>
          </table>
        </div>
        <div className="flex w-[17px] flex-col">
          <div className="h-[24px] border-y border-[#c9ced4] bg-[#49555f]" />
          <div className="flex flex-1 py-px pl-px"><ScrollBar thumb="props" /></div>
        </div>
      </div>
      <div className="flex h-[26px] shrink-0 items-start pl-[3px]" role="tablist">
        <button role="tab" aria-selected="true" className="h-[23px] whitespace-nowrap bg-[#acd2ff] pl-2 pr-1 font-bold text-[#0a1a33]">
          <T>BIM 수량목록(OBS) 객체 : A1 날개벽</T>
        </button>
        <button role="tab" aria-selected="false" className="h-[24px] whitespace-nowrap bg-[#2f6fb8] pl-2 pr-[6px] font-bold text-[#d8eaff]">
          <T>BIM 수량목록(OBS) 변수 : A1 날개벽</T>
        </button>
      </div>
    </section>
  );
}

function StatusBar() {
  return (
    <footer className="flex h-[25px] shrink-0 items-center rounded-b-md border-t border-[#b9bec6] bg-[#eaf2fd] pl-[3px] pr-[5px] text-[#1c1c1c]">
      <svg width="17" height="16" viewBox="0 0 17 16">
        <rect x="1" y="3" width="9" height="11" rx="1.500" fill="#a8552a" />
        <path d="M3 3V1.500h4V3M1 6.500h9" fill="none" stroke="#6e2f12" strokeWidth="1.200" />
        <path d="M7.500 5.500h5l2.500 2.500v7h-7.500z" fill="#fff" stroke="#57616e" />
      </svg>
      <span className="ml-[4px]"><T>File : I:₩토목 교량 샘플.nvq</T></span>
      <svg className="ml-auto" width="13" height="15" viewBox="0 0 13 15" fill="#fff" stroke="#e0542f" strokeWidth="1.400">
        <path d="M4.500 1H12v12.500H1V4.500z" />
        <path d="M1 4.500h3.500V1" fill="#e0542f" />
        <path d="M4 8.500l2 2L9.500 7" fill="none" />
      </svg>
      <span className="ml-[7px]"><T>버전 : 2.0</T></span>
      <span className="ml-[11px] font-bold">[User : jhleehome]</span>
    </footer>
  );
}

export default function App() {
  return (
    <div className="flex h-screen flex-col overflow-hidden bg-[#2f343b] font-['DejaVu_Sans_Condensed','Noto_Sans_CJK_KR',sans-serif] text-[11px] leading-[16px] text-[#2a2a2a]">
      <TitleBar />
      <Ribbon />
      <main className="flex min-h-0 flex-1 gap-1 bg-white pb-[2px] pl-[2px] pr-[3px] pt-[2px]">
        <TreePanel />
        <div className="flex min-w-0 flex-1 flex-col gap-1">
          <ListPanel />
          <CostPanel />
        </div>
        <div className="flex w-[564px] shrink-0 flex-col gap-[5px]">
          <ViewPanel />
          <PropsPanel />
        </div>
      </main>
      <StatusBar />
      <div className="h-px shrink-0" />
    </div>
  );
}
